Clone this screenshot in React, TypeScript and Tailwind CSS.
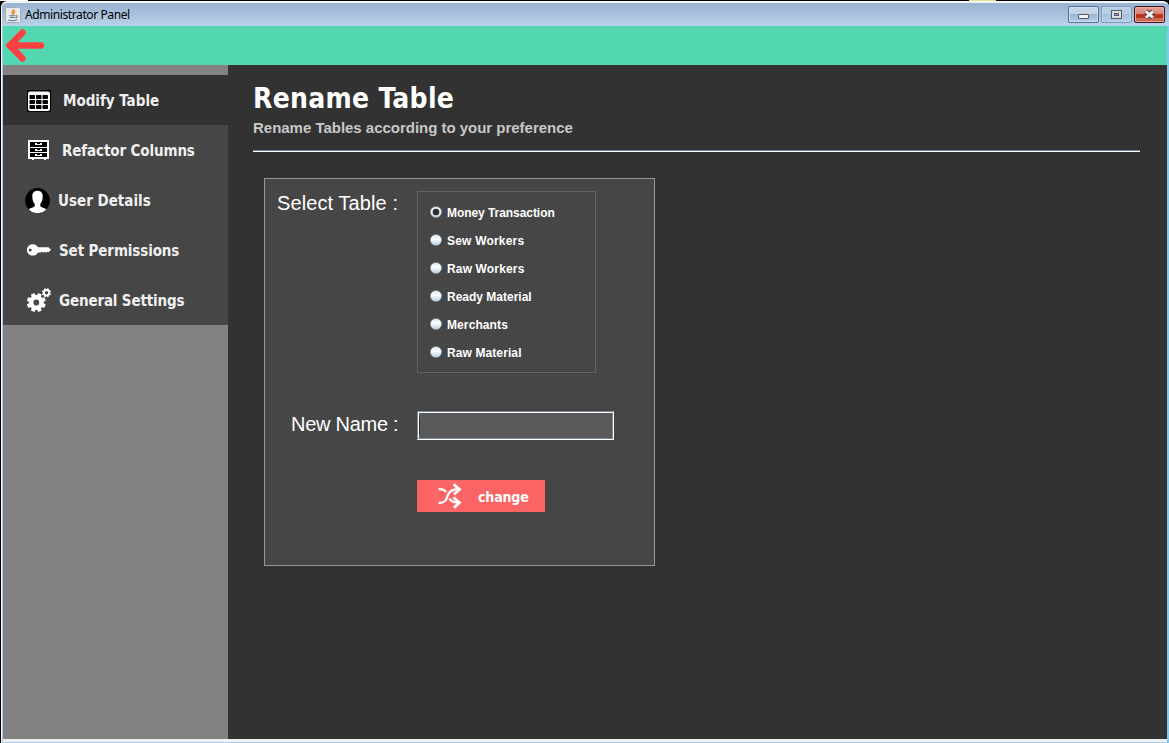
import React from "react";

const tahoma = "font-['DejaVu_Sans_Condensed','DejaVu_Sans',sans-serif] [font-stretch:condensed] font-bold whitespace-nowrap";
const arial = "font-['Liberation_Sans',sans-serif] whitespace-nowrap";

function JavaIcon() {
  return (
    <svg width="16" height="16" viewBox="0 0 16 16">
      <rect x=".5" y=".5" width="15" height="15" rx="1" fill="#e9e9e7" stroke="#a9abad" />
      <path d="M8.6 2c1 1.600-2 2.400-1.500 4 .2.900.9 1.200.7 2M10.300 4.200c-1.800.8-2 1.800-1.100 2.900" fill="none" stroke="#e58a35" strokeWidth="1.400" />
      <path d="M4.200 8.700h6M5 10.500h4.700M3 13c3 .9 7 .8 9.300-.2M10.500 8.800c2.500-.5 2 1.700 0 2.200" fill="none" stroke="#5b7b9b" strokeWidth="1.100" />
    </svg>
  );
}

function WindowButtons() {
  return (
    <div className="flex h-[17px] gap-[2px]">
      <div className="flex h-[17px] w-[31px] items-end justify-center rounded-[2px] border border-[#56708e] bg-linear-to-b from-[#c3d4e8] from-45% via-[#9ab4d1] via-50% to-[#b5cee9] pb-[3px] shadow-[inset_0_0_0_1px_#cfdef0]">
        <div className="h-[5px] w-[11px] rounded-[1px] border border-[#535666] bg-[#f2f2f2]" />
      </div>
      <div className="flex h-[17px] w-[31px] items-center justify-center rounded-[2px] border border-[#8199b8] bg-linear-to-b from-[#b9cfe7] from-45% via-[#a7c0dd] via-50% to-[#b5cee9] shadow-[inset_0_0_0_1px_#c0d4ea]">
        <svg width="11" height="9" viewBox="0 0 11 9" shapeRendering="crispEdges">
          <rect x=".5" y=".5" width="10" height="8" fill="#dedddc" stroke="#55586a" />
          <rect x="3.500" y="3.500" width="4" height="2" fill="#8cabc9" stroke="#55586a" />
        </svg>
      </div>
      <div className="flex h-[17px] w-[31px] items-center justify-center rounded-[2px] border border-[#431422] bg-linear-to-b from-[#e7a296] from-0% via-[#d5847a] via-45% to-[#c65a43] shadow-[inset_0_0_0_1px_#e8a99d]">
        <svg width="27" height="13" viewBox="1 0 27 13">
          <rect y="6" width="29" height="4" fill="#bb3520" />
          <path d="M11 3.500l7 6M18 3.500l-7 6" stroke="#5b4455" strokeWidth="5" />
          <path d="M11 3.500l7 6M18 3.500l-7 6" stroke="#f4f3f3" strokeWidth="2.800" />
        </svg>
      </div>
    </div>
  );
}

function TableIcon() {
  return (
    <svg width="24" height="22" viewBox="0 0 24 22" className="mt-[2px]">
      <rect width="24" height="22" fill="#000" />
      <rect x="1" y="1.500" width="22" height="19.500" rx="2" fill="#fff" />
      {[5, 10, 15].map((y) => [2.5, 9, 15.5].map((x) => (
        <rect key={`${x}-${y}`} x={x} y={y} width="5.500" height="4" rx=".7" fill="#050505" />
      )))}
    </svg>
  );
}

function CabinetIcon() {
  return (
    <svg width="21" height="20" viewBox="0 0 21 20" shapeRendering="crispEdges">
      <rect width="21" height="19" fill="#fff" />
      <rect x="4" y="19" width="2" height="1" fill="#fff" />
      <rect x="16" y="19" width="2" height="1" fill="#fff" />
      {[2, 8, 13].map((y) => (
        <g key={y}>
          <rect x="2" y={y} width="17" height={y === 2 ? 5 : 4} fill="#000" />
          <path d={`M7 ${y + 1}h2v1h3v-1h2v2h-7z`} fill="#fff" />
        </g>
      ))}
    </svg>
  );
}

function UserIcon() {
  return (
    <svg width="25" height="25" viewBox="0 0 25 25">
      <circle cx="12.500" cy="12.500" r="12.400" fill="#000" />
      <path d="M12.500 2.700C9 2.700 7.100 5 7.300 8.500c.1 3.500.9 5.800 2.400 7.500v2.200c-1 1.500-4.200 1.300-6 3.200a12.300 12.300 0 0 0 17.600 0c-1.800-1.900-5-1.700-6-3.200V16c1.500-1.700 2.300-4 2.400-7.500C17.900 5 16 2.700 12.500 2.700z" fill="#fff" />
    </svg>
  );
}

function KeyIcon() {
  return (
    <svg width="24" height="12" viewBox="0 0 24 12">
      <path fillRule="evenodd" d="M5.800.2c2.500 0 4.200 1.300 5.200 3.100h10.500L24 5.800l-2.500 2.400-1.200-.5-1 1-1.400-1-1.400 1-1.400-1-1.300.9H11c-1 1.900-2.800 3-5.200 3C2.500 11.600 0 9.200 0 5.900S2.500.2 5.800.2zM3.200 4.400a1.500 1.500 0 1 0 0 3 1.500 1.500 0 0 0 0-3z" fill="#fff" />
    </svg>
  );
}

function Gear({ cx, cy, r, hole, tooth }: { cx: number; cy: number; r: number; hole: number; tooth: number }) {
  return (
    <g transform={`translate(${cx} ${cy})`}>
      <circle r={(r + hole) / 2} fill="none" stroke="#fff" strokeWidth={r - hole} />
      {[22.5, 67.5, 112.5, 157.5, 202.5, 247.5, 292.5, 337.5].map((a) => (
        <rect key={a} transform={`rotate(${a})`} x={-tooth / 2} y={-r - tooth * 0.5} width={tooth} height={tooth * 0.8} rx={tooth * 0.15} fill="#fff" />
      ))}
    </g>
  );
}

function GearsIcon() {
  return (
    <svg width="25" height="24" viewBox="0 0 25 24">
      <Gear cx={9.3} cy={14.500} r={7.500} hole={2.900} tooth={4} />
      <Gear cx={19.500} cy={4.700} r={3.500} hole={1.700} tooth={2} />
    </svg>
  );
}

function ShuffleIcon() {
  return (
    <svg width="30" height="30" viewBox="0 0 30 30" fill="none">
      <circle cx="15" cy="15" r="14.500" stroke="#f87678" strokeWidth=".7" />
      <path d="M3.500 8.200c4-.3 6 .5 7.500 2.800M3.500 21.800c5 .3 7.500-1 8.800-6C13.600 10.500 17 8 24 8.200M14.500 17.500c1.500 3 4 4.200 9.500 4" stroke="#fff" strokeWidth="2.300" />
      <path d="M18.500 3.200l6 5L19 13.500M18.500 16.500l6 5L19 26.800" stroke="#fff" strokeWidth="2.700" />
    </svg>
  );
}

const navItems = [
  { label: "Modify Table", icon: <TableIcon />, row: "bg-[#323232]", iconBox: "ml-6 w-9", text: "tracking-[0px]" },
  { label: "Refactor Columns", icon: <CabinetIcon />, row: "", iconBox: "ml-[25px] w-[34px]", text: "tracking-[-0.12px]" },
  { label: "User Details", icon: <UserIcon />, row: "", iconBox: "ml-[22px] w-[33px]", text: "tracking-[0px]" },
  { label: "Set Permissions", icon: <KeyIcon />, row: "", iconBox: "ml-6 w-8", text: "tracking-[-0.12px]" },
  { label: "General Settings", icon: <GearsIcon />, row: "", iconBox: "ml-6 w-8", text: "tracking-[-0.15px]" },
];

const tables = [
  { name: "Money Transaction", text: "tracking-[-0.06px]" },
  { name: "Sew Workers", text: "tracking-[0.2px]" },
  { name: "Raw Workers", text: "tracking-[0.15px]" },
  { name: "Ready Material", text: "tracking-[0px]" },
  { name: "Merchants", text: "tracking-[0.1px]" },
  { name: "Raw Material", text: "tracking-[0.1px]" },
];

function Radio({ selected }: { selected: boolean }) {
  return (
    <svg width="12" height="12" viewBox="0 0 12 12" className="mr-[5px] shrink-0">
      <defs>
        <linearGradient id="ball" x1="0" x2="0" y1="0" y2="1">
          <stop offset="0" stopColor="#cfdeeb" />
          <stop offset=".4" stopColor="#ffffff" />
          <stop offset="1" stopColor="#b4cde1" />
        </linearGradient>
      </defs>
      <circle cx="6" cy="6" r="5.600" fill="url(#ball)" stroke="#7b8b9b" strokeWidth=".8" strokeDasharray="2.200 2.200" />
      {selected && <circle cx="6" cy="6" r="3.300" fill="#303030" />}
    </svg>
  );
}

export default function App() {
  return (
    <div className="flex h-[743px] w-[1169px] flex-col overflow-hidden bg-black">
      <div className="flex h-px justify-start">
        <div className="w-[28px] bg-white" />
        <div className="ml-[941px] w-[27px] bg-[#e9df8c]" />
      </div>
      <div className="ml-px flex flex-1 flex-col overflow-hidden rounded-t-[6px] border-t-2 border-l border-t-[#f2f5f8] border-l-[#f4f8fc] bg-[#b9d1ea]">
        <header className="flex h-[23px] shrink-0 items-start bg-linear-to-b from-[#98b3d0] to-[#b9d1ea] pl-[3px]">
          <div className="mt-[4px]"><JavaIcon /></div>
          <span className="mt-[3px] ml-[4px] font-['Noto_Sans',sans-serif] text-[12px] leading-[17px] tracking-[-0.4px] whitespace-nowrap text-black">Administrator Panel</span>
          <div className="mt-[3px] mr-[4px] ml-auto"><WindowButtons /></div>
        </header>
        <div className="flex min-h-0 flex-1 flex-col border-r-2 border-l border-r-[#7fcbe9] border-l-[#aecbee]">
          <div className="flex h-[39px] shrink-0 items-center bg-[#53d7b0] pl-[2px]">
            <svg width="40" height="34" viewBox="0 0 40 34" fill="none" stroke="#ff4040">
              <path d="M17.500 3.500L5 16.500l12.500 13" strokeWidth="6.500" strokeLinecap="round" />
              <path d="M5 16.500h31" strokeWidth="6.500" strokeLinecap="round" />
              <path d="M.5 16.500L10 7v19z" fill="#ff4040" stroke="none" />
            </svg>
          </div>
          <div className="flex h-[674px] shrink-0">
            <nav className="w-[225px] bg-[#828282] pt-[10px]">
              <ul className="bg-[#464646]">
                {navItems.map((item) => (
                  <li key={item.label} className={`flex h-[50px] items-center ${item.row}`}>
                    <span className={`shrink-0 ${item.iconBox}`}>{item.icon}</span>
                    <span className={`${tahoma} pt-[2px] text-[15px] leading-5 text-[#f0f0f0] ${item.text}`}>{item.label}</span>
                  </li>
                ))}
              </ul>
            </nav>
            <main className="flex-1 bg-[#323232] pt-[16px] pl-[25px]">
              <h1 className={`${tahoma} h-[36px] text-[28px] leading-[36px] tracking-[0.28px] text-white`}>Rename Table</h1>
              <p className={`${arial} mt-px h-5 text-[15px] leading-5 font-bold tracking-[-0.02px] text-[#c8c8c8]`}>Rename Tables according to your preference</p>
              <div className="mt-[12px] h-[2px] w-[887px] border-t border-b border-t-[#6482b4] border-b-white" />
              <section className="mt-[26px] ml-[11px] h-[388px] w-[391px] border border-[#969696] bg-[#464646] pt-[12px] pl-[12px]">
                <div className="flex">
                  <span className={`${arial} mt-px w-[140px] text-[20px] leading-[22px] tracking-[0.1px] text-white`}>Select Table :</span>
                  <div className="h-[182px] w-[179px] border border-[#646464] pt-[6px] pl-[12px]">
                    {tables.map(({ name, text }, i) => (
                      <label key={name} className="flex h-[28px] items-center">
                        <Radio selected={i === 0} />
                        <span className={`${arial} pt-px text-[12px] leading-[14px] font-bold text-white ${text}`}>{name}</span>
                      </label>
                    ))}
                  </div>
                </div>
                <div className="mt-[38px] flex">
                  <span className={`${arial} mt-[2px] ml-[14px] w-[126px] text-[20px] leading-[22px] tracking-[-0.27px] text-white`}>New Name :</span>
                  <div className="h-[29px] w-[197px] border border-t-[#7a8a99] border-r-white border-b-white border-l-[#7a8a99]">
                    <div className="h-full border border-t-white border-r-[#7a8a99] border-b-[#7a8a99] border-l-white bg-[#5a5a5a] pt-[4px]">
                      <div className="h-[17px] w-px bg-[#323232]" />
                    </div>
                  </div>
                </div>
                <button className="mt-[40px] ml-[140px] flex h-[32px] w-[128px] items-center bg-[#fa6464] pl-[18px]">
                  <ShuffleIcon />
                  <span className={`${tahoma} ml-[12px] pt-px pl-px text-[14px] leading-5 tracking-[-0.15px] text-white`}>change</span>
                </button>
              </section>
            </main>
          </div>
          <div className="h-[3px] shrink-0 bg-[#f0f0f0]" />
          <div className="h-px shrink-0 bg-[#b4cfee]" />
        </div>
      </div>
    </div>
  );
}
